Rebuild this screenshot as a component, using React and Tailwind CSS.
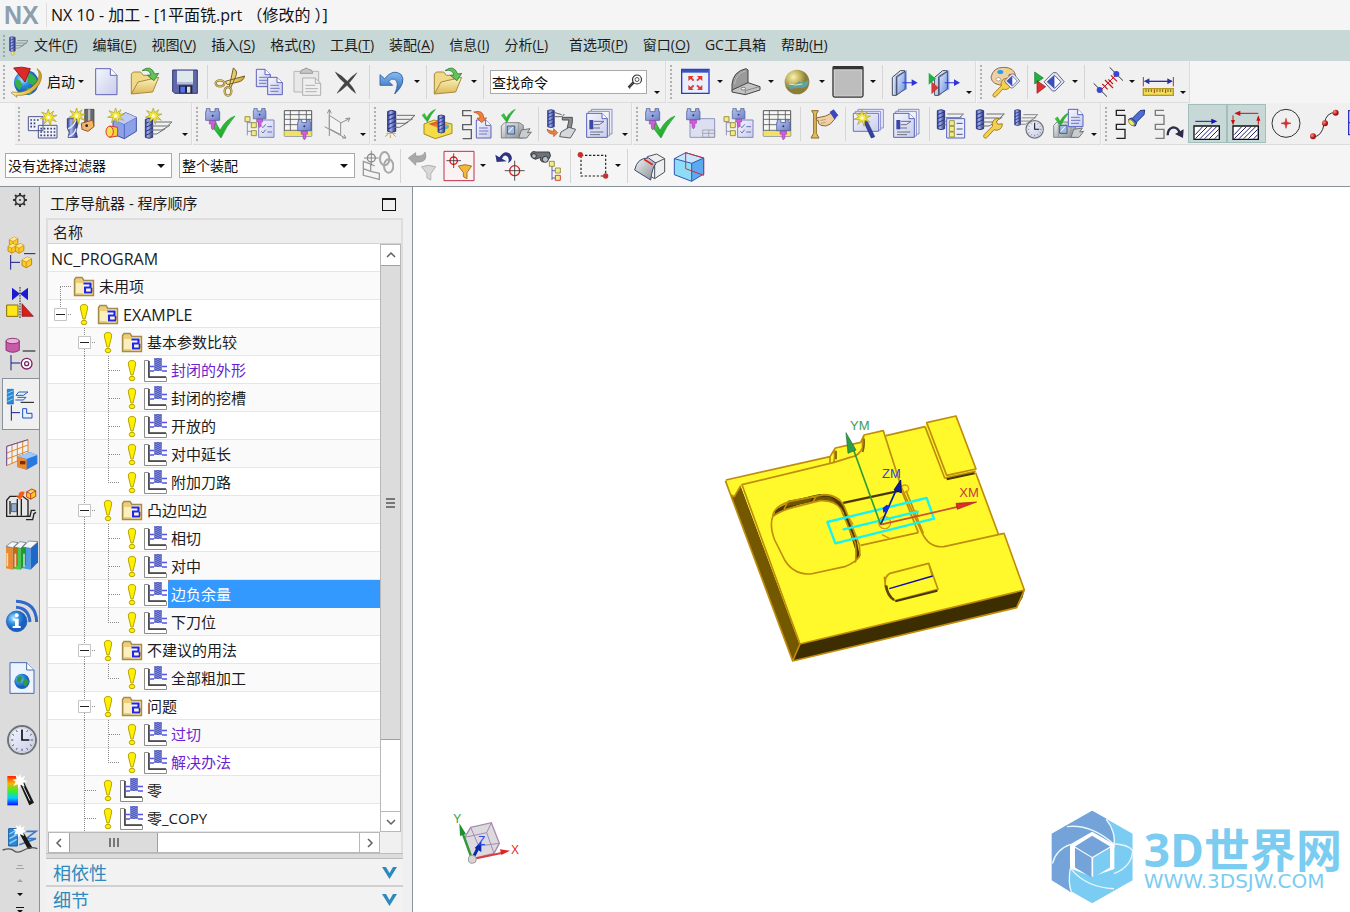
import React, { useState } from 'react';

const Svg = ({ children, className = 'w-8 h-8', box = '0 0 96 96' }) => (
  <svg viewBox={box} className={`${className} shrink-0`} fill="none" aria-hidden="true">{children}</svg>
);

/* ---------- shared icon parts, drawn on a 96 unit grid ---------- */

const Defs = () => (
  <svg className="absolute w-0 h-0" aria-hidden="true">
    <defs>
      <linearGradient id="tool"><stop offset="0" stopColor="#2b3a9a" /><stop offset=".35" stopColor="#a8b4f0" /><stop offset="1" stopColor="#26307c" /></linearGradient>
      <linearGradient id="page" x2="1" y2="1"><stop offset="0" stopColor="#f4f6ff" /><stop offset="1" stopColor="#c9cdea" /></linearGradient>
      <linearGradient id="folder" x2="0" y2="1"><stop offset="0" stopColor="#fdf3bd" /><stop offset="1" stopColor="#dcb95a" /></linearGradient>
      <linearGradient id="head" x2="1" y2="1"><stop offset="0" stopColor="#b9c6ef" /><stop offset="1" stopColor="#6c80c8" /></linearGradient>
      <linearGradient id="steel" x2="1" y2="1"><stop offset="0" stopColor="#f2f4f5" /><stop offset="1" stopColor="#858c90" /></linearGradient>
      <linearGradient id="plane" x2="1" y2="1"><stop offset="0" stopColor="#dfeaff" /><stop offset="1" stopColor="#6f90dd" /></linearGradient>
      <linearGradient id="green" x2="1" y2="1"><stop offset="0" stopColor="#4be04b" /><stop offset="1" stopColor="#118a22" /></linearGradient>
      <linearGradient id="gold"><stop offset="0" stopColor="#fdf0a0" /><stop offset="1" stopColor="#cf9f22" /></linearGradient>
      <linearGradient id="undo" x2="0" y2="1"><stop offset="0" stopColor="#86bdf0" /><stop offset="1" stopColor="#2b62b8" /></linearGradient>
      <linearGradient id="hot" x2="1" y2="1"><stop offset="0" stopColor="#e0302c" /><stop offset="1" stopColor="#f5d030" /></linearGradient>
      <linearGradient id="rainbow" x2="0" y2="1">
        <stop offset="0" stopColor="#ff2000" /><stop offset=".25" stopColor="#ffb000" /><stop offset=".5" stopColor="#40f020" /><stop offset=".75" stopColor="#00d0ff" /><stop offset="1" stopColor="#1010ff" />
      </linearGradient>
      <radialGradient id="globe" cx=".35" cy=".35"><stop offset="0" stopColor="#bfeaff" /><stop offset=".55" stopColor="#2d8fe0" /><stop offset="1" stopColor="#1a5fc0" /></radialGradient>
      <radialGradient id="ball" cx=".35" cy=".3"><stop offset="0" stopColor="#f7f3b0" /><stop offset=".6" stopColor="#c0b25c" /><stop offset="1" stopColor="#8a7e3c" /></radialGradient>
      <radialGradient id="dot" cx=".35" cy=".35"><stop offset="0" stopColor="#ff8d80" /><stop offset="1" stopColor="#a81010" /></radialGradient>
    </defs>
  </svg>
);

const At = ({ x = 0, y = 0, s = 1, children }) => <g transform={`translate(${x} ${y}) scale(${s})`}>{children}</g>;

const Tool = ({ x, y, s }) => (
  <At x={x} y={y} s={s}>
    <path d="M0 4q11-6 22 0v54q-11 6-22 0z" fill="url(#tool)" stroke="#232c70" strokeWidth="2.5" />
    <path d="M1 16l20-8M1 28l20-9M1 40l20-9M1 52l20-9" stroke="#27348f" strokeWidth="3" />
  </At>
);
const Hatch = ({ x, y, s }) => (
  <At x={x} y={y} s={s}>
    <path d="M0 0h54M-6 12h46l14-12M-12 24h36l24-14M-18 36h26l26-16" stroke="#6d6f73" strokeWidth="3" />
  </At>
);
const Spark = ({ x, y, s }) => (
  <At x={x} y={y} s={s}>
    <path d="M0-25l4 15 12-9-6 13 16 0-14 7 12 12-15-6-3 18-6-17-13 12 5-15-16-1 14-7-10-13 15 6z" fill="#f3e63a" stroke="#a99a33" strokeWidth="2" />
    <circle r="5" fill="#fffde0" />
  </At>
);
const Head = ({ x, y, s }) => (
  <At x={x} y={y} s={s}>
    <path d="M2 1h11v9h15V1h11v9h3v26H0V10h2z" fill="url(#head)" stroke="#50629f" strokeWidth="2.5" />
    <circle cx="21" cy="22" r="3" fill="#243070" />
    <path d="M11 37h20v10h-5v12l-5 6-4-6V47h-6z" fill="#d35be0" stroke="#8c2aa0" strokeWidth="1.5" />
  </At>
);
const Check = ({ x, y, s }) => (
  <At x={x} y={y} s={s}><path d="M0 30l13-9 12 22Q42 10 70 0q-26 30-42 66z" fill="url(#green)" stroke="#159a2a" strokeWidth="2" /></At>
);
const Page = ({ x, y, w = 44, h = 56, c = '#5f62b8' }) => (
  <g>
    <path d={`M${x} ${y}h${w - 16}l16 16v${h - 16}h-${w}z`} fill="url(#page)" stroke={c} strokeWidth="3" />
    <path d={`M${x + w - 16} ${y}v16h16`} fill="#fff" stroke={c} strokeWidth="3" />
    <path d={`M${x + 8} ${y + 24}h${w - 18}M${x + 8} ${y + 33}h${w - 16}M${x + 8} ${y + 42}h${w - 20}`} stroke={c} strokeWidth="2.5" />
  </g>
);
const Sq = ({ x, y, c = '#8b8230' }) => <path d={`M${x} ${y}h15v15h-15z`} fill="#f2eb8c" stroke={c} strokeWidth="2.5" />;
const Snake = ({ x, y, c = '#222' }) => <path transform={`translate(${x} ${y})`} d="M27 0H1v15h26v27H1v15h26v27H1" stroke={c} strokeWidth="4" />;
const Wrench = ({ x, y, s }) => (
  <At x={x} y={y} s={s}><path d="M4 52L30 26Q26 8 42 2q6-2 9 0L42 12l5 8 14-2q0 16-14 20-7 1-12-1L14 60q-2 5-9 3-6-4-1-11z" fill="#f5cf50" stroke="#9d7a1c" strokeWidth="3" /></At>
);
const Machine = ({ x, y, s }) => (
  <At x={x} y={y} s={s}>
    <path d="M0 58V22l10-10h44l12 8v38z" fill="url(#steel)" stroke="#707579" strokeWidth="2.5" />
    <path d="M14 12v46M52 12v46" stroke="#8c9195" strokeWidth="2.5" />
    <path d="M18 22h22v24H18z" fill="#9fbbe4" stroke="#4c5a78" strokeWidth="3" /><path d="M22 40l12-14" stroke="#fff" strokeWidth="3" />
    <path d="M60 34l26-4-8 12 12-2-14 18H52z" fill="#c9cdd0" stroke="#6e7478" strokeWidth="3" />
  </At>
);
const OpenFolder = () => (
  <>
    <path d="M4 84V24l6-6h22l8 10h22v16" fill="#f0d988" stroke="#a98a3a" strokeWidth="3" />
    <path d="M4 84L24 48l62-14-18 44z" fill="url(#folder)" stroke="#a98a3a" strokeWidth="3" />
    <path d="M36 14Q62-6 74 24l12-2-14 22-20-16 11-1Q58 8 36 14z" fill="#62c45a" stroke="#2f8030" strokeWidth="2.5" />
  </>
);
const Book = () => (
  <>
    <path d="M14 28L54 12v58L14 90z" fill="url(#plane)" />
    <path d="M10 34v54h12V32l26-16v52L22 88M10 34L34 14h14" stroke="#454a5c" strokeWidth="3" fill="#d9dde6" fillOpacity=".5" />
    <path d="M24 34l24-17v52L24 86z" fill="url(#plane)" stroke="#34407c" strokeWidth="2" />
    <path d="M40 49h28v-9l18 10-18 10v-8H40z" fill="#2a34d8" />
  </>
);
const Table = () => (
  <>
    <path d="M4 8h82v76H4z" fill="#f6f6f4" stroke="#55575c" strokeWidth="3" />
    <path d="M4 68h82v16H4z" fill="#efe264" />
    <path d="M4 20h82M4 34h82M4 50h82M4 67h82M22 8v60M48 8v60M70 8v60" stroke="#55575c" strokeWidth="2.5" />
    <Head x="44" y="34" s=".95" />
  </>
);
const TreeHead = () => (
  <>
    <path d="M44 36h46v52H44z" fill="url(#page)" stroke="#7d82c4" strokeWidth="3" />
    <path d="M10 28v54M10 44h14M10 70h14" stroke="#7a7dbb" strokeWidth="2.5" />
    <Sq x="3" y="26" /><Sq x="22" y="44" /><Sq x="22" y="68" />
    <path d="M52 54l5 5 8-10M70 56h14M52 70l5 5 8-10M70 72h14" stroke="#6a70b0" strokeWidth="3" />
    <Head x="28" y="0" s=".9" />
  </>
);
const Doc3 = () => (
  <>
    <path d="M22 4h62v74H22z" fill="#eceef6" stroke="#8a8fc0" strokeWidth="3" />
    <path d="M14 10h62v74H14z" fill="#f3f4fa" stroke="#8a8fc0" strokeWidth="3" />
    <path d="M8 16h46l16 16v56H8z" fill="url(#page)" stroke="#5562c0" strokeWidth="3" /><path d="M54 16v16h16" fill="#fff" stroke="#5562c0" strokeWidth="3" />
    <path d="M30 40h30l-14 10H30M28 60h20M18 72h40M18 80h30" stroke="#6b6f80" strokeWidth="3" /><path d="M16 36h12v28H16z" fill="#3b48a8" />
  </>
);
const Axis3 = () => (
  <>
    <path d="M22 84V6M16 16l6-12 6 12M22 62l60-30M70 32l14-2-6 12M8 56l62 34M60 90l12 0-6-10" stroke="#8d9093" strokeWidth="3" />
    <path d="M22 22l34 22v36L22 62z" fill="#f3f3f3" stroke="#8d9093" strokeWidth="3" />
  </>
);
const Clock = ({ x, y, s }) => (
  <At x={x} y={y} s={s}>
    <circle r="42" fill="#eef4fb" stroke="#6f7478" strokeWidth="6" />
    <circle r="37" fill="url(#page)" stroke="#b6bcc2" strokeWidth="2" />
    <path d="M0-33v7M0 26v7M-33 0h7M26 0h7M-17-29l3 5M17-29l-3 5M-17 29l3-5M17 29l-3-5M-29-17l5 3M29-17l-5 3M-29 17l5-3M29 17l-5-3" stroke="#555" strokeWidth="3" />
    <path d="M0-30V0h22" stroke="#111" strokeWidth="5" />
  </At>
);
const Target = ({ x, y, r = 14 }) => (
  <g>
    <circle cx={x} cy={y} r={r} stroke="#dd1f1f" strokeWidth="4" />
    <path d={`M${x - r * 2} ${y}h${r * 4}M${x} ${y - r * 2}v${r * 4}`} stroke="#3a3030" strokeWidth="2.5" />
  </g>
);
const Funnel = ({ x, y, s, f = '#f0b83c', c = '#94691a' }) => (
  <At x={x} y={y} s={s}><path d="M0 4q20-8 40 0L26 24v18l-11-6V24z" fill={f} stroke={c} strokeWidth="2.5" /></At>
);
const CadBlock = ({ x, y, s }) => (
  <At x={x} y={y} s={s}>
    <path d="M0 10L18 0l14 6v20L14 36 0 28z" fill="#ffc928" stroke="#a87400" strokeWidth="2.5" />
    <path d="M0 10L18 0l14 6-18 11z" fill="#ffe88a" />
    <path d="M0 10l14 7 18-11M14 17v19" stroke="#c08a10" strokeWidth="2.5" />
  </At>
);
const TwoArrows = () => <><path d="M2 18l26 18L2 54z" fill="#22b043" stroke="#0b7a24" strokeWidth="2" /><path d="M9 44l26 18-26 20z" fill="#dd3030" stroke="#8f1515" strokeWidth="2" /></>;
const Gem = ({ x, y, s }) => (
  <At x={x} y={y} s={s}>
    <path d="M0 28L28 0h10l24 28-28 28H26z" fill="#e6e9f2" stroke="#5c6580" strokeWidth="3" />
    <path d="M10 28L32 8l20 20-20 20z" fill="#fff" stroke="#4a54a8" strokeWidth="3" /><path d="M32 8v40L10 28z" fill="#3c50b8" />
  </At>
);

const icons = {
  globe: (
    <>
      <circle cx="46" cy="50" r="37" fill="url(#globe)" />
      <path d="M52 22q20 2 26 22l-12 14-16-10zM48 64l18 4-6 16-16 2zM12 40l14 2 8 16-8 14Q10 62 12 40z" fill="#35b04a" />
      <path d="M2 78Q46 86 76 50 92 26 78 8q24 14 6 48Q58 92 16 88l2 6L0 80z" fill="url(#gold)" stroke="#9a741c" strokeWidth="2" />
      <path d="M8 6q24-6 50 2L42 48z" fill="#dc2a2a" stroke="#8e1010" strokeWidth="2.5" />
    </>
  ),
  newFile: <><path d="M14 8h44l20 20v58H14z" fill="url(#page)" stroke="#6064b4" strokeWidth="3" /><path d="M58 8v20h20" fill="#fff" stroke="#6064b4" strokeWidth="3" /></>,
  open: <OpenFolder />,
  save: (
    <>
      <path d="M11 12h74v70H17l-6-6z" fill="#6069a8" stroke="#32397a" strokeWidth="3" />
      <path d="M24 14h48v36H24z" fill="#dfe8ea" /><path d="M24 50h48v5H24z" fill="#b8c0d4" /><path d="M30 58h40v24H30z" fill="#20243c" /><path d="M34 62h14v18H34z" fill="#5870f0" /><path d="M54 62h10v18H54z" fill="#ddd" />
    </>
  ),
  cut: (
    <>
      <path d="M34 46l58-16q-4 16-20 18l-32 8zM46 62L58 6q16 10 6 28L50 66z" fill="url(#gold)" stroke="#75602a" strokeWidth="3" />
      <ellipse cx="18" cy="52" rx="13" ry="9" stroke="#8a7330" strokeWidth="7" /><ellipse cx="42" cy="76" rx="10" ry="13" stroke="#8a7330" strokeWidth="7" />
      <ellipse cx="18" cy="52" rx="13" ry="9" stroke="#e8cf70" strokeWidth="3" /><ellipse cx="42" cy="76" rx="10" ry="13" stroke="#e8cf70" strokeWidth="3" />
    </>
  ),
  copy: <><Page x={10} y={10} w={42} h={52} /><Page x={44} y={34} w={44} h={52} /></>,
  paste: (
    <>
      <path d="M6 16h74v62H6z" fill="#e8e8e8" stroke="#b5b5b5" strokeWidth="3" /><path d="M24 22q2-12 12-12 6-8 14 0 12 0 12 12z" fill="#c6c6c6" stroke="#9a9a9a" strokeWidth="3" />
      <path d="M32 36h38l16 16v36H32z" fill="#efefef" stroke="#b0b0b0" strokeWidth="3" /><path d="M70 36v16h16M40 58h30M40 68h38M40 77h34" stroke="#b0b0b0" strokeWidth="3" />
    </>
  ),
  del: <path d="M13 18q20 10 36 28Q62 30 78 20q-10 16-24 31 16 17 20 31-14-10-26-24-14 14-30 24 8-14 23-31Q22 36 13 18z" fill="#444" stroke="#2d2d2d" strokeWidth="1" />,
  undo: <path d="M12 26l14 12Q52 6 76 26q16 24-20 58 16-36 0-44-10-4-18 6l12 12H12z" fill="url(#undo)" stroke="#2a5aa5" strokeWidth="2.5" />,
  fit: (
    <>
      <path d="M8 10h82v72H8z" fill="#e9f0fc" stroke="#2b36d8" strokeWidth="4" /><path d="M9 11h80v9H9z" fill="#3a53b8" />
      <path d="M28 30h16l-5 5 7 7-4 4-7-7-7 6zM70 30H54l5 5-7 7 4 4 7-7 7 6zM28 72h16l-5-5 7-7-4-4-7 7-7-6zM70 72H54l5-5-7-7 4-4 7 7 7-6z" fill="#e23a2e" />
    </>
  ),
  bracket: (
    <>
      <path d="M6 54Q10 16 48 8l6 4v42L6 74z" fill="#9a9a9a" stroke="#444" strokeWidth="3" /><path d="M14 54Q18 22 48 14" stroke="#bbb" strokeWidth="3" /><path d="M6 72l48-22 36 12v10L46 86 6 78z" fill="#c4c4c4" stroke="#444" strokeWidth="3" />
      <path d="M46 74v10M46 74l42-12" stroke="#666" strokeWidth="2" /><ellipse cx="40" cy="68" rx="7" ry="4" fill="#eee" stroke="#555" strokeWidth="2" />
    </>
  ),
  sphere: <><circle cx="48" cy="48" r="37" fill="url(#ball)" /><path d="M14 52q30 8 40-6 10 8 28-4 2 20-18 24-20-4-38 4 8-10-12-18z" fill="#5ba3a5" /><path d="M24 54q20 6 40 0" stroke="#e8e8c0" strokeWidth="3" /></>,
  shade: <><path d="M3 6q0-5 5-5h80q5 0 5 5v82q0 5-5 5H8q-5 0-5-5z" fill="#bdbdbd" stroke="#333" strokeWidth="4" /><path d="M4 3h88v7H4z" fill="#333" /><path d="M7 12h82v78H7z" stroke="#dcdcdc" strokeWidth="2" /></>,
  plane: <Book />,
  plane2: <><At x="10"><Book /></At><path d="M2 20l22 18L2 56z" fill="#22b043" /><path d="M11 48l20 17-20 18z" fill="#d83a3a" stroke="#8f1515" /></>,
  palette: (
    <>
      <path d="M6 34Q12 4 44 4t36 26q0 14-22 14-12 2-10 14-40 0-42-24z" fill="#ecd0a8" stroke="#8e6f4a" strokeWidth="3" />
      <ellipse cx="34" cy="18" rx="9" ry="6" fill="#28a0e8" /><ellipse cx="56" cy="14" rx="7" ry="5" fill="#f5df2c" /><ellipse cx="66" cy="28" rx="8" ry="5" fill="#e04020" /><ellipse cx="28" cy="40" rx="7" ry="5" fill="#fff" stroke="#a58560" strokeWidth="2" />
      <Wrench x="10" y="36" s=".9" /><Gem x="46" y="24" s=".75" />
    </>
  ),
  play: <><At x="0"><TwoArrows /></At><Gem x="30" y="20" s=".98" /></>,
  dist: (
    <>
      <path d="M8 52l40 40M56 4l40 40" stroke="#333" strokeWidth="3" /><path d="M28 74l50-50" stroke="#d12" strokeWidth="3" />
      <path d="M34 54l16 16M42 42l24 24M52 40l14 14M60 28l18 18" stroke="#c01818" strokeWidth="3.5" /><circle cx="26" cy="72" r="9" fill="#3b46d2" /><circle cx="76" cy="24" r="9" fill="#3b46d2" />
    </>
  ),
  ruler: (
    <>
      <path d="M4 33v28M94 33v28" stroke="#d02020" strokeWidth="3" /><path d="M8 46h82" stroke="#2c349c" strokeWidth="4" /><path d="M6 46l16-9v18zM92 46l-16-9v18z" fill="#2c349c" />
      <path d="M4 68h90v20H4z" fill="#f1dc58" stroke="#b59920" strokeWidth="4" /><path d="M12 70v8M20 70v8M28 70v8M45 70v8M54 70v8M62 70v8M78 70v8M86 70v8" stroke="#4d4320" strokeWidth="2.5" /><path d="M37 70v11M71 70v11" stroke="#c03020" strokeWidth="3" />
    </>
  ),
  mProgram: (
    <>
      <path d="M4 26h44v42H4zM34 52h56v38H34z" fill="#f1f3fb" stroke="#4c548c" strokeWidth="3" />
      <path d="M10 36h30M10 46h20M10 56h20M40 62h46M40 72h46M40 82h46" stroke="#3c4270" strokeWidth="5" strokeDasharray="5 5" /><Spark x="64" y="28" />
    </>
  ),
  mTool: (
    <>
      <path d="M56 4h28v50l-14 12-14-8z" fill="#666a70" stroke="#3a3a3a" strokeWidth="2" /><path d="M66 4h7v54h-7z" fill="#bbb" />
      <path d="M46 46l34-10 4 20-18 14-18-6z" fill="#f3b46c" stroke="#94582a" strokeWidth="3" /><circle cx="62" cy="53" r="4" fill="#222" />
      <path d="M4 32h28q6 20-2 38l4 18H6q8-14-2-28z" fill="url(#tool)" stroke="#2a3680" strokeWidth="2.5" /><path d="M6 62q16-4 24-26M8 86q18-6 22-24" stroke="#e4eaff" strokeWidth="4" /><Spark x="32" y="24" />
    </>
  ),
  mGeom: (
    <>
      <path d="M24 36l38-22 32 14v42L58 92 24 78z" fill="#8ba2ea" stroke="#40509e" strokeWidth="3" /><path d="M24 36l34 12 36-20M58 48v44" stroke="#5568bc" strokeWidth="3" /><path d="M24 36l38-22 32 14-36 20z" fill="#c0cbf6" />
      <path d="M14 54l24 4v26l-24 4z" fill="#f0d33a" stroke="#d8362a" strokeWidth="3" /><ellipse cx="14" cy="71" rx="11" ry="16" fill="#f8e14c" stroke="#d8362a" strokeWidth="3" /><Spark x="32" y="24" />
    </>
  ),
  mOp: <><Tool x="4" y="30" /><Hatch x="30" y="42" /><Spark x="28" y="24" /></>,
  vTool: <><Check x="20" y="24" /><Head x="2" y="1" /></>,
  vTree: <TreeHead />,
  vTable: <Table />,
  axis: <Axis3 />,
  opNew: <><Tool x="14" y="6" s="1.1" /><Hatch x="42" y="22" /><path d="M6 86l10-8M22 90v-10M38 86l-8-8M10 76l28 0" stroke="#d8a820" strokeWidth="3" /></>,
  opCheck: (
    <>
      <path d="M6 48l30-12 54 12v28L40 92 6 78z" fill="#f4db4a" stroke="#a58c20" strokeWidth="3" /><path d="M20 48l24-8 36 10-26 12z" fill="url(#hot)" /><path d="M52 62l28-12v10l-28 14z" fill="#48b8d8" />
      <Tool x="48" y="20" s=".9" /><Check x="0" y="4" s=".58" />
    </>
  ),
  opList: <><Snake x={4} y={8} c="#5c5f64" /><Page x={46} y={36} w={44} h={54} /><path d="M38 12q30-8 30 18h9L62 44 48 30h9Q58 18 38 12z" fill="#f0803a" stroke="#b04a18" strokeWidth="2" /></>,
  opMachine: <><Machine x="4" y="32" /><Check x="4" y="4" s=".6" /></>,
  post: (
    <>
      <Tool x="8" y="4" s=".9" /><path d="M30 14l20 6M30 26h22l6-8" stroke="#666" strokeWidth="3" /><path d="M6 64q4 16 20 14v8l12-12-12-12v8q-10 0-20-6z" fill="#e98340" stroke="#b05020" strokeWidth="2" />
      <path d="M52 28h30v14l-6 30h-12l8-36H52z" fill="#8b8f94" stroke="#4d5054" strokeWidth="3" /><path d="M48 72l24-14 20 6-16 26-32-4z" fill="#d5d8db" stroke="#5c6064" strokeWidth="3" />
    </>
  ),
  docs: <Doc3 />,
  vPage: <><path d="M18 32h74v56H18z" fill="#dcdff0" stroke="#8f93c6" strokeWidth="3" /><path d="M56 66h36v22H56zM56 76h36M74 66v22" stroke="#9b9ca6" strokeWidth="2.5" /><Head x="8" y="1" s=".95" /></>,
  hand: (
    <>
      <path d="M14 8h20l-6 10v58l8 14H12l8-14V18z" fill="#e3bd62" stroke="#8c6a24" strokeWidth="3" />
      <path d="M28 30l28-6 20-10 10 16-16 18q-14 10-28 4-10-4-8-14l-6-2z" fill="#f0cfa0" stroke="#8a6740" strokeWidth="3" /><path d="M40 38l16-4M42 46l14-3" stroke="#b08a5c" strokeWidth="2" /><path d="M68 12l12-8 14 18-12 12z" fill="#3c48c0" />
    </>
  ),
  wizard: (
    <>
      <path d="M18 4h76v56H18z" fill="#eef" stroke="#8a8ed0" strokeWidth="3" /><path d="M10 10h76v56H10z" fill="#eef" stroke="#8a8ed0" strokeWidth="3" /><path d="M4 16h76v54H4z" fill="url(#page)" stroke="#6a70c0" strokeWidth="3" />
      <path d="M34 38l8-6 26 54-10 4z" fill="#3443a8" stroke="#1d2868" strokeWidth="2" /><Spark x="30" y="30" />
    </>
  ),
  opProps: <><Tool x="4" y="4" s="1" /><Hatch x="34" y="18" s=".9" /><path d="M32 32h54v58H32z" fill="#e9edff" stroke="#5562c0" strokeWidth="3" /><Sq x="40" y="38" /><Sq x="40" y="55" /><Sq x="40" y="72" /><path d="M62 46h18M62 63h18M62 79h18" stroke="#556" strokeWidth="3" /></>,
  opWrench: <><Tool x="4" y="4" /><Hatch x="34" y="18" /><Wrench x="24" y="30" s=".95" /></>,
  opClock: <><Tool x="2" y="4" s=".8" /><Hatch x="28" y="20" s=".8" /><Clock x="62" y="64" s=".62" /></>,
  opSheet: <><Machine x="2" y="30" /><Page x={46} y={4} w={44} h={52} c="#5562c0" /><Check x="6" y="14" s=".6" /></>,
  pathShow: (
    <>
      <Snake x={6} y={7} /><path d="M52 34l26-26 14-2-2 14-26 26z" fill="#4a6fd6" stroke="#24337e" strokeWidth="3" /><path d="M44 34l8-4 16 14-4 10q-18 0-20-20z" fill="#4a6fd6" stroke="#24337e" strokeWidth="3" /><ellipse cx="52" cy="44" rx="6" ry="11" transform="rotate(-45 52 44)" fill="#f3e860" stroke="#8a8130" strokeWidth="2" />
    </>
  ),
  pathReplay: <><Snake x={6} y={7} c="#77797c" /><path d="M44 82q0-20 16-24 16 0 20 18" stroke="#2a2c4a" strokeWidth="7" /><path d="M66 78l26-14-2 26z" fill="#2a2c4a" /></>,
  feed: <><path d="M10 40h56" stroke="#1212b8" strokeWidth="3" /><path d="M58 32l18 8-18 8z" fill="#1212b8" /><path d="M6 54h76v40H6z" fill="#fff" stroke="#111" strokeWidth="4" /><path d="M10 80l22-24M10 92l36-36M24 92l36-36M38 92l36-36M52 92l28-28M68 92l12-12" stroke="#23236e" strokeWidth="3" /></>,
  feedBox: (
    <>
      <path d="M20 16h62M6 22v24M82 50V26" stroke="#c41212" strokeWidth="3" /><path d="M28 8L10 16l18 8zM0 36h12l-6 16zM76 38h12l-6-16z" fill="#c41212" />
      <path d="M6 54h76v40H6z" fill="#fff" stroke="#111" strokeWidth="4" /><path d="M10 80l22-24M10 92l36-36M24 92l36-36M38 92l36-36M52 92l28-28M68 92l12-12" stroke="#23236e" strokeWidth="3" />
    </>
  ),
  circle: <><circle cx="48" cy="46" r="42" stroke="#333" strokeWidth="3" /><path d="M48 31l3 12 12 3-12 3-3 12-3-12-12-3 12-3z" fill="#d03030" stroke="#d03030" strokeWidth="2" /></>,
  spline: <><path d="M12 86q26 2 34-40Q52 12 80 14" stroke="#333" strokeWidth="3" /><circle cx="12" cy="85" r="9" fill="url(#dot)" /><circle cx="48" cy="46" r="9" fill="url(#dot)" /><circle cx="80" cy="14" r="9" fill="url(#dot)" /></>,
  box: <path d="M2 8h82v72H2zM2 44h82" stroke="#2a34c8" strokeWidth="4" />,
  link: (
    <>
      <path d="M4 34l22 8v22L4 56zM26 64l26 6v18L4 76V56M26 42l12 6" stroke="#9a9a9a" strokeWidth="4" /><circle cx="28" cy="24" r="12" stroke="#8a8a8a" strokeWidth="4" /><path d="M28 2v44M6 24h44" stroke="#8a8a8a" strokeWidth="3" />
      <ellipse cx="68" cy="26" rx="14" ry="20" stroke="#a8a8a8" strokeWidth="6" /><ellipse cx="80" cy="48" rx="14" ry="20" stroke="#a8a8a8" strokeWidth="6" />
    </>
  ),
  filterReset: <><path d="M4 24L26 8v10h12q14-2 16-12 10 28-18 30H26v10z" fill="#a9a9a9" stroke="#8f8f8f" strokeWidth="2" /><Funnel x="44" y="46" s="1.05" f="#d8d8d8" c="#aaa" /></>,
  filterSel: <><path d="M3 4h90v88H3z" fill="#fbf3f3" stroke="#c2304a" strokeWidth="3" /><Target x={32} y={32} r={11} /><Funnel x="46" y="44" /></>,
  rotateSel: <><path d="M4 14l12 8Q34-4 50 14q10 14-8 26 6-16-4-22-8-6-14 8l14 8L8 36z" fill="#2e3480" /><Target x={62} y={62} r={15} /></>,
  findTree: (
    <>
      <path d="M2 12Q6 2 18 6l40 0q8 12-2 22l-16 8q-12-2-8-14l-16 6Q0 22 2 12z" fill="#6c7278" stroke="#3c4044" strokeWidth="3" /><circle cx="46" cy="28" r="9" fill="#b9c2ca" stroke="#333" strokeWidth="3" /><circle cx="12" cy="18" r="7" fill="#b9c2ca" stroke="#333" strokeWidth="3" />
      <path d="M66 44v46M66 62h10M66 84h10" stroke="#5b60b0" strokeWidth="3" /><Sq x="58" y="34" /><Sq x="76" y="54" /><Sq x="76" y="76" c="#d02020" />
    </>
  ),
  rectSel: <><path d="M12 16h74v62H12z" stroke="#222" strokeWidth="3.5" strokeDasharray="7 5" /><circle cx="10" cy="14" r="8" fill="#c83030" /><circle cx="86" cy="78" r="8" fill="#c83030" /></>,
  face: (
    <>
      <path d="M40 20l28-8 24 14v40L62 86 40 74z" fill="#eceeef" stroke="#4e5258" strokeWidth="3" /><path d="M62 40l30-14M62 40v46" stroke="#4e5258" strokeWidth="3" />
      <path d="M2 60Q10 22 44 24l22 16Q54 54 50 90z" fill="url(#steel)" stroke="#3a4a78" strokeWidth="3" /><path d="M30 28l26 16" stroke="#e02020" strokeWidth="5" />
    </>
  ),
  cube: (
    <>
      <path d="M4 26L38 8l54 16v48L56 94 4 74z" fill="#5da8ee" /><path d="M4 26l52 14v54L4 74z" fill="#8fdcf7" /><path d="M4 26L38 8l54 16-36 16z" fill="#c8e6fa" /><path d="M4 26L38 8l54 16v48L56 94 4 74zM4 26l52 14 36-16M56 40v54" stroke="#3358b8" strokeWidth="3" />
      <path d="M38 8v48l54 20V24z" stroke="#d42c40" strokeWidth="3" />
    </>
  ),
};

/* ---------- toolbars ---------- */

const Caret = ({ low, label = '更多' }) => (
  <button type="button" aria-label={label} className={`w-3 h-full flex justify-center shrink-0 ${low ? 'items-end pb-2' : 'items-center'}`}>
    <Svg className="w-[6px] h-[3px]" box="0 0 6 3"><path d="M0 0h6L3 3z" fill="#111" /></Svg>
  </button>
);
const Sep = () => <div className="w-[6px] flex justify-center shrink-0"><div className="w-px h-[34px] bg-[#d5d5d5]" /></div>;
const Grip = () => <div className="w-2 flex justify-center shrink-0"><div className="h-[34px] border-l-2 border-dotted border-[#b0b0b0]" /></div>;
const MenuGrip = () => <div className="w-2 flex justify-center shrink-0"><div className="h-[22px] border-l-2 border-dotted border-[#98a8a6]" /></div>;
const IconBtn = ({ name, on, narrow }) => (
  <button
    type="button"
    aria-label={name}
    className={`h-[39px] flex items-center justify-center shrink-0 ${narrow ? 'w-9' : 'w-[39px]'} ${on ? 'bg-[#c8d8d7] border border-[#a3bfbb]' : ''}`}
  >
    <Svg>{icons[name]}</Svg>
  </button>
);

// '|' separator, 'v' drop-down arrow, 'm' overflow arrow, '*' marks a pressed button
const Items = ({ list }) => list.map((it, i) => {
  if (it === '|') return <Sep key={i} />;
  if (it === 'v') return <Caret key={i} />;
  if (it === 'm') return <Caret key={i} low />;
  return <IconBtn key={i} name={it.replace('*', '')} on={it.endsWith('*')} />;
});
const Group = ({ children }) => (
  <div className="flex items-center h-[42px] bg-[#f0f0f0] border-r border-b border-[#dcdcdc] shrink-0"><Grip />{children}</div>
);

const menus = [['文件', 'F'], ['编辑', 'E'], ['视图', 'V'], ['插入', 'S'], ['格式', 'R'], ['工具', 'T'], ['装配', 'A'], ['信息', 'I'], ['分析', 'L'], ['首选项', 'P', true], ['窗口', 'O'], ['GC工具箱'], ['帮助', 'H']];

const row2 = [
  ['mProgram', 'mTool', 'mGeom', 'mOp', 'm'],
  ['vTool', 'vTree', 'vTable', 'axis', 'm'],
  ['opNew', 'opCheck', 'opList', 'opMachine', '|', 'post', 'docs', 'm'],
  ['vTool', 'vPage', 'vTree', 'vTable', '|', 'hand', '|', 'wizard', 'docs', '|', 'opProps', 'opWrench', 'opClock', 'opSheet', 'm'],
  ['pathShow', 'pathReplay', 'feed*', 'feedBox*', 'circle', 'spline', 'box'],
];

const Combo = ({ value, className, label }) => (
  <div className={`relative ${className}`}>
    <select aria-label={label} className="appearance-none w-full h-[25px] bg-white border border-[#a9a9a9] pl-[2px] text-sm leading-none text-[#111] rounded-none outline-none">
      <option>{value}</option>
    </select>
    <Svg className="w-2 h-1 absolute right-[7px] top-[11px] pointer-events-none" box="0 0 8 4"><path d="M0 0h8L4 4z" fill="#111" /></Svg>
  </div>
);

/* ---------- resource bar ---------- */

const side = [
  <><CadBlock x="10" y="0" s=".8" /><CadBlock x="6" y="20" s=".8" /><CadBlock x="28" y="20" s=".8" /><path d="M14 54v44M14 76h28M54 50h34" stroke="#1a1a8c" strokeWidth="3" /><CadBlock x="48" y="60" s=".9" /></>,
  <><path d="M18 2l24 18-24 20zM66 2L42 20l24 20z" fill="#1a1ad0" /><path d="M42 0v94" stroke="#222" strokeWidth="3" strokeDasharray="5 3" /><path d="M2 54h34v34H2z" fill="#ffe81a" stroke="#8a6a00" strokeWidth="3" /><path d="M48 50l34 38H48z" fill="#d8201c" stroke="#800c0c" strokeWidth="2" /></>,
  <><path d="M0 12v28q20 12 40 0V12z" fill="#c65ba6" stroke="#7b2464" strokeWidth="2.5" /><ellipse cx="20" cy="12" rx="20" ry="8" fill="#eeb0dc" stroke="#7b2464" strokeWidth="2.5" /><path d="M50 42h38" stroke="#111" strokeWidth="3" /><path d="M15 54v46M15 78h28" stroke="#1a1a8c" strokeWidth="3" /><circle cx="62" cy="80" r="16" fill="#fff" stroke="#7b2464" strokeWidth="4" /><circle cx="62" cy="80" r="6" stroke="#7b2464" strokeWidth="4" /></>,
  <><path d="M4 4h18v44H4z" fill="#2b8ad8" stroke="#1a5aa0" strokeWidth="2" /><path d="M4 16l18-8M4 28l18-8M4 40l18-8" stroke="#8fd0f8" strokeWidth="3" /><path d="M38 12h28l-14 10H30zM34 28h26l-8 8H28" stroke="#2060b8" strokeWidth="3" /><path d="M44 43h40" stroke="#111" strokeWidth="3" /><path d="M16 52v46M16 74h26" stroke="#1a1a8c" strokeWidth="3" /><path d="M50 62h12v14h16v14H50z" fill="#e8f2ff" stroke="#1c50c0" strokeWidth="3" /></>,
  <><path d="M2 22L66 2v50L2 80z" fill="#fff" fillOpacity=".6" /><path d="M2 22L66 2v50L2 80zM2 42l64-24M2 60l64-24M18 17v56M34 12v54M50 7v50" stroke="#e0872c" strokeWidth="3" /><path d="M2 22v58M2 22L66 2" stroke="#6b50b0" strokeWidth="3" /><path d="M34 52l38-12 22 8v26L62 92 34 84z" fill="#2878e0" /><path d="M34 52l28 8v32l-28-8z" fill="#f08828" /><path d="M34 52l38-12 22 8-32 12z" fill="#9ac8ff" /><path d="M42 66h16v10H42z" fill="#7a2c08" /></>,
  <><path d="M2 82V34l10-12h38l16 12v48z" fill="#e6e6e6" stroke="#222" strokeWidth="4" /><path d="M12 36v40M34 30v50M46 30v50" stroke="#222" strokeWidth="4" /><path d="M16 44h16v24H16z" fill="#8faacc" stroke="#333" strokeWidth="2" /><path d="M60 92h20l4-18 6-4M60 82h12l4-18h12" stroke="#222" strokeWidth="4" /><At x="62" y="0" s=".85"><path d="M0 10L18 0l14 6v20L14 36 0 28zM0 10l14 7 18-11M14 17v19" fill="#ffc928" stroke="#c02a10" strokeWidth="3" /></At><path d="M56 8Q36 4 38 22h-8l12 10 10-12" fill="#f06018" /></>,
  <><path d="M0 22l20 4v66l-20-4z" fill="#e88a30" /><path d="M24 24l20 4v64l-20-2z" fill="#3ad048" /><path d="M50 24l24 4v64l-24-4z" fill="#4a9ae8" /><path d="M20 26L36 12v66L20 92z" fill="#c06a1c" /><path d="M44 28l16-16v64L44 92z" fill="#1f9a30" /><path d="M74 28L96 8v62L74 92z" fill="#2068c8" /><path d="M0 22L18 8l18 3-16 15zM24 24L42 8l18 3-16 17zM50 24L68 6l28 2-22 20z" fill="#f4f8fc" stroke="#5a6a70" strokeWidth="2" /><path d="M4 42v40M28 44v40M54 44v40" stroke="#ffffffaa" strokeWidth="5" /></>,
  <><circle cx="32" cy="64" r="31" fill="url(#globe)" stroke="#1759ae" strokeWidth="2" /><circle cx="32" cy="46" r="6" fill="#fff" /><path d="M22 56h16v22h6v6H20v-6h7V62h-5z" fill="#fff" /><path d="M30 22q38 2 42 44M30 4q60 2 62 62" stroke="#3468c8" strokeWidth="9" /></>,
  <><path d="M12 2h50l22 22v70H12z" fill="#eef4ff" stroke="#4668b0" strokeWidth="3" /><path d="M62 2v22h22" fill="#fff" stroke="#4668b0" strokeWidth="3" /><circle cx="48" cy="58" r="23" fill="url(#globe)" /><path d="M34 44q14-6 16 4l-8 16-10-6zM56 50q12 0 12 10l-8 14-8-6z" fill="#2f9a40" /></>,
  <Clock x="48" y="48" />,
  <><path d="M4 6h32v88H4z" fill="url(#rainbow)" /><path d="M38 22l12-6 34 70-14 8z" fill="#181818" /><path d="M46 26l26 54" stroke="#ddd" strokeWidth="3" /><path d="M42-2l4 14 12-8-6 14 14 4-14 4 4 12-12-6-6 14-3-15-13 5 7-13-10-6 13-2-4-13 11 7z" fill="#fff" /></>,
  <><path d="M8 14h26v52H8z" fill="#2b8ad8" stroke="#1a5aa0" strokeWidth="3" /><path d="M10 30l22-12M10 44l22-12M10 58l22-12" stroke="#9ad6fa" strokeWidth="4" /><path d="M46 22h44L60 44h30L40 62" stroke="#3c78c8" strokeWidth="5" /><path d="M36 20l10-6 34 58-14 4z" fill="#181818" /><path d="M42 0l4 12 10-6-4 12 12 2-12 6 2 10-11-5-6 10-3-12-10 3 5-11-8-5 11-2-2-11 9 6z" fill="#fff" /><path d="M-10 78q24-8 34 2t30-2 40-4" stroke="#555" strokeWidth="4" /></>,
];
const sideH = ['h-[50px]', 'h-[50px]', 'h-[50px]', 'h-[52px]', 'h-[50px]', 'h-[50px]', 'h-[50px]', 'mt-[5px] h-[62px]', 'h-[62px]', 'h-14 pt-[6px]', 'h-[50px]', 'h-[50px]'];

const ResourceBar = () => (
  <nav className="w-10 shrink-0 bg-[#dcdcdc] border-r border-[#87929a] flex flex-col overflow-hidden">
    <button type="button" aria-label="设置" className="h-[41px] shrink-0 flex justify-center pt-[5px]">
      <Svg className="w-4 h-4" box="0 0 16 16"><circle cx="8" cy="8" r="4.6" stroke="#333" strokeWidth="1.6" /><circle cx="8" cy="8" r="1" fill="#333" /><path d="M8 1v2M8 13v2M1 8h2M13 8h2M3 3l1.5 1.5M11.500 11.500L13 13M3 13l1.500-1.500M11.500 4.500L13 3" stroke="#333" strokeWidth="2" /></Svg>
    </button>
    {side.map((s, i) => (
      <button
        key={i}
        type="button"
        aria-label={`资源 ${i + 1}`}
        className={`${sideH[i]} shrink-0 flex items-center justify-center ${i === 3 ? 'ml-[2px] -mr-px bg-[#f0f0f0] border border-r-0 border-[#87929a]' : 'pl-1'}`}
      >
        <Svg className="w-8 h-8 overflow-visible">{s}</Svg>
      </button>
    ))}
    <div className="flex flex-col items-center">
      <Svg className="w-2 h-[60px]" box="0 0 8 60"><path d="M1 1h6L4-2zM0 3h8v1H0zM1 17h6L4 14z" fill="#a3a3a3" /><path d="M1 28h6L4 31zM0 42h8v1H0zM1 45h6L4 48z" fill="#111" /></Svg>
    </div>
  </nav>
);

/* ---------- operation navigator ---------- */

// one letter per 24px column: v line, t branch, l last branch, r top corner, b toggle, B toggle without a line below, ! status, f folder, o operation, _ blank
const rows = [
  ['', 'NC_PROGRAM'],
  ['rf', '未用项'],
  ['B!f', 'EXAMPLE'],
  ['_b!f', '基本参数比较'],
  ['_vt!o', '封闭的外形', 'purple'],
  ['_vt!o', '封闭的挖槽'],
  ['_vt!o', '开放的'],
  ['_vt!o', '对中延长'],
  ['_vl!o', '附加刀路'],
  ['_b!f', '凸边凹边'],
  ['_vt!o', '相切'],
  ['_vt!o', '对中'],
  ['_vt!o', '边负余量'],
  ['_vl!o', '下刀位'],
  ['_b!f', '不建议的用法'],
  ['_vl!o', '全部粗加工'],
  ['_b!f', '问题'],
  ['_vt!o', '过切', 'purple'],
  ['_vl!o', '解决办法', 'purple'],
  ['_t!o', '零'],
  ['_t!o', '零_COPY'],
];

const dash = { stroke: '#8a8a8a', strokeWidth: 1, strokeDasharray: '1 1', shapeRendering: 'crispEdges' };
const toggle = <><path d="M6.500 8.500h12v12h-12z" fill="#fff" stroke="#c4c4c4" /><path d="M8 14.500h9" stroke="#222" shapeRendering="crispEdges" /></>;
const cells = {
  _: null,
  v: <path d="M12.500 0v28" {...dash} />,
  t: <path d="M12.500 0v28M13 14.500h11" {...dash} />,
  l: <path d="M12.500 0v14M12 14.500h12" {...dash} />,
  r: <path d="M12.500 15v13M12 14.500h12" {...dash} />,
  b: <><path d="M12.500 0v8M12.500 21v7M20 14.500h4" {...dash} />{toggle}</>,
  B: <><path d="M12.500 0v8M20 14.500h4" {...dash} />{toggle}</>,
  '!': (
    <>
      <path d="M12 4.500q4.500 0 3.500 4.500l-2.500 10h-2L8.500 9q-1-4.500 3.500-4.500z" fill="#fdf000" stroke="#b9a400" /><ellipse cx="12" cy="22.500" rx="2.800" ry="2.200" fill="#fdf000" stroke="#b9a400" />
    </>
  ),
  f: (
    <>
      <path d="M2.500 23.500v-16l1.500-2h6l2 3h9.500v15z" fill="#eccf78" stroke="#a58a48" strokeWidth="1.400" /><path d="M4 11h15v10H4z" fill="#fbefbd" />
      <path d="M12 11.500h6.500v4M18.500 15.500H13v5h7" stroke="#fff" strokeWidth="3.500" /><path d="M11.500 11.500h7v4H13v5h7" stroke="#2326e0" strokeWidth="2.200" /><path d="M19.500 16v4" stroke="#2326e0" strokeWidth="1.600" />
    </>
  ),
  o: (
    <>
      <path d="M.5 4.500h4v17h18v4H.5z" fill="#fff" stroke="#8c8c8c" /><path d="M5 5v16h17" stroke="#3a3a3a" strokeWidth="1.500" />
      <path d="M10 2h8v13h-8z" fill="#7c84d4" /><path d="M12 3v12M14 2v13M16 3v12" stroke="#2f38a8" strokeDasharray="1 1" /><path d="M6 10.500h4M18 10.500h5M6 15h4M18 15h5" stroke="#5454ea" strokeWidth="1.400" />
    </>
  ),
};

const TreeRow = ({ cols, label, purple, odd, selected, onSelect }) => (
  <li role="treeitem" aria-selected={selected} onClick={onSelect} className={`h-7 shrink-0 flex border-b border-[#e6e6e6] ${odd ? 'bg-[#fafafa]' : 'bg-white'} ${/^[A-Z_]+$/.test(label) ? 'text-base' : ''}`}>
    {[...cols].map((c, i) => <Svg key={i} className="w-6 h-7" box="0 0 24 28">{cells[c]}</Svg>)}
    <span className={`flex items-center px-[3px] pt-px h-7 whitespace-nowrap ${selected ? 'flex-1 bg-[#3399ff] text-white outline-1 -outline-offset-1 outline-dotted outline-[#c07830]' : purple ? 'text-[#6a1fd0]' : 'text-[#1c1c1c]'}`}>{label}</span>
  </li>
);

const Chev = ({ d }) => <Svg className="w-[10px] h-[10px]" box="0 0 10 10"><path d={d} stroke="#606060" strokeWidth="1.500" /></Svg>;

const Section = ({ title, last }) => (
  <button type="button" className={`${last ? 'h-[25px]' : 'h-7 border-b-2'} shrink-0 w-full flex items-center justify-between pl-[7px] pr-[6px] pt-px border-[#d0d0d0] bg-[#f2f2f2] text-lg leading-none text-[#2e8abd]`}>
    {title}
    <Svg className="w-[15px] h-[12px]" box="0 0 15 12"><path d="M0 0h4l3.500 6L11 0h4L7.500 12z" fill="#2e8abd" /></Svg>
  </button>
);

const Navigator = () => {
  const [selected, setSelected] = useState(12);
  return (
    <aside className="w-[373px] shrink-0 bg-[#f0f0f0] border-r border-[#87929a] pl-[6px] pr-[9px] flex flex-col overflow-hidden text-[15px]">
      <div className="h-[31px] shrink-0 flex items-center justify-between pl-1 pr-[7px] pt-px text-[#1c1c1c]">
        <h2>工序导航器 - 程序顺序</h2>
        <button type="button" aria-label="最大化" className="w-[14px] h-[13px] mt-[2px] border border-t-2 border-[#111]" />
      </div>
      <div className="flex-1 min-h-0 flex flex-col border-2 border-b-0 border-[#dedede]">
        <div className="h-6 shrink-0 flex items-center pl-[5px] pt-px bg-[#eee] border-b border-[#d2d2d2] text-[#1c1c1c]">名称</div>
        <div className="flex-1 min-h-0 flex">
          <ul role="tree" className="flex-1 min-w-0 overflow-hidden flex flex-col bg-white">
            {rows.map(([cols, label, color], i) => (
              <TreeRow key={i} cols={cols} label={label} purple={color === 'purple'} odd={i % 2 === 1} selected={selected === i} onSelect={() => setSelected(i)} />
            ))}
          </ul>
          <div className="w-[21px] shrink-0 flex flex-col border border-[#b8b8b8] bg-white">
            <button type="button" aria-label="向上" className="h-5 shrink-0 flex items-center justify-center"><Chev d="M1 7l4-4 4 4" /></button>
            <div className="grow-[475] basis-0 bg-[#dcdcdc] border-y border-[#a0a0a0] flex items-center justify-center">
              <Svg className="w-[9px] h-[10px]" box="0 0 9 10"><path d="M0 1h9M0 5h9M0 9h9" stroke="#555" strokeWidth="1.500" /></Svg>
            </div>
            <div className="grow-[71] basis-0" />
            <button type="button" aria-label="向下" className="h-5 shrink-0 flex items-center justify-center border-t border-[#b8b8b8]"><Chev d="M1 3l4 4 4-4" /></button>
          </div>
        </div>
        <div className="h-[21px] shrink-0 mr-[21px] flex border border-[#b8b8b8] bg-white">
          <button type="button" aria-label="向左" className="w-5 flex items-center justify-center"><Chev d="M7 1L3 5l4 4" /></button>
          <div className="w-[89px] bg-[#dcdcdc] border-x border-[#a0a0a0] flex items-center justify-center">
            <Svg className="w-[10px] h-[9px]" box="0 0 10 9"><path d="M1 0v9M5 0v9M9 0v9" stroke="#555" strokeWidth="1.500" /></Svg>
          </div>
          <button type="button" aria-label="向右" className="w-5 ml-auto flex items-center justify-center border-l border-[#b8b8b8]"><Chev d="M3 1l4 4-4 4" /></button>
        </div>
      </div>
      <div className="h-[6px] shrink-0 bg-[#dcdcdc] border-y border-[#bdbdbd]" />
      <Section title="相依性" />
      <Section title="细节" last />
    </aside>
  );
};

/* ---------- graphics window ---------- */

const Part = () => (
  <svg viewBox="0 0 990 840" className="absolute left-[297px] top-[213px] w-[330px] h-[280px]" fill="none" strokeLinejoin="round">
    <path d="M46 242L92 257 270 732 248 783z" fill="#735800" />
    <path d="M268 732L943 570 938 592 920 623 248 783z" fill="#3d2e02" />
    <path d="M48 240L360 170 376 144 452 127 462 105 520 92 528 107 645 80 650 68 738 48 798 207 797 218 865 402 882 400 943 570 268 732 92 257 73 290 62 284z" fill="#fff92c" />
    <g stroke="#c08c0c" strokeWidth="5">
      <path d="M46 242L248 783 920 623 943 570 882 400 702 440Q656 444 636 398L574 262 520 92 462 105Q456 122 458 142 448 168 420 172L370 188 96 254 270 732 943 570M270 732L248 783M48 240L360 170 376 144 452 127 462 105M370 188Q376 176 372 152M360 170v18M528 107L645 80M865 402L797 218M62 284L73 290 92 257" />
      <path d="M650 68L738 48 798 207 710 226zM645 80L704 234 797 214M738 48L742 60" />
      <path d="M452 436L625 398M394 312L575 272M575 272L625 398M588 272L640 400" />
      <path d="M540 520L656 490 684 568 556 602Q534 590 526 560 522 530 540 520zM526 552l-3-22M656 490l10 36" />
    </g>
    <path d="M196 330Q240 300 330 282 380 284 402 318L440 420 450 470 436 484 438 456 400 336Q380 304 344 300L300 306Q240 318 192 346z" fill="#493802" />
    <path d="M310 306l12-18-4 2h40l22 16-40-4zM224 320l10-18 76-14-12 20z" fill="#6d5602" />
    <path d="M188 350Q178 378 194 420L224 480Q250 524 302 522L404 500Q440 486 450 466L448 434 402 318Q384 284 342 284L240 304Q190 320 188 350zM188 350Q210 332 250 322L330 302Q374 300 392 326L436 430Q440 460 436 488M222 328l12-24M308 308l12-22" stroke="#c08c0c" strokeWidth="5" />
    <path d="M400 308L568 272M710 238l84-18M556 604l126-32" stroke="#453502" strokeWidth="6" />
    <path d="M378 152v26M462 116q2 24-4 40" stroke="#7a5c06" strokeWidth="5" />
    <path d="M528 556q4 30 24 44" stroke="#5c4702" strokeWidth="8" />
    <g stroke="#d99a10" strokeWidth="4"><circle cx="585" cy="266" r="11" /><circle cx="612" cy="342" r="11" /><circle cx="524" cy="368" r="18" /><path d="M516 404l24 12M414 348l16 26" /></g>
    <path d="M538 566L668 528" stroke="#0b0ba8" strokeWidth="4" />
    <path d="M352 366L650 294 672 356 376 430zM398 389L626 334" stroke="#14f4f4" strokeWidth="7" />
    <path d="M512 374L430 148" stroke="#2f9e33" strokeWidth="5" /><path d="M408 98l30 52-24 10z" fill="#2d9d49" stroke="#1c6e30" strokeWidth="2" />
    <path d="M512 374L562 262" stroke="#0a1f9c" strokeWidth="5" /><path d="M572 240l2 38-22-8z" fill="#0a1f9c" stroke="#06125e" strokeWidth="3" /><path d="M518 324l12-10 8 4-6 16-12 4z" fill="#0a2af0" />
    <path d="M512 374L746 320" stroke="#c8502a" strokeWidth="5" /><path d="M800 306l-62 4 4 18z" fill="#e02c2c" stroke="#a01c1c" strokeWidth="2" />
    <g fontFamily="Liberation Sans, sans-serif" fontSize="39">
      <text x="420" y="91" fill="#3f9a55">YM</text><text x="516" y="234" fill="#3048d8">ZM</text><text x="748" y="290" fill="#c83a3a">XM</text>
    </g>
  </svg>
);

const Triad = () => (
  <svg viewBox="0 0 300 240" className="absolute left-[27px] bottom-8 w-[100px] h-[80px]" fill="none">
    <path d="M92 82L154 68 178 130 162 160 98 176 74 112z" fill="#dcdadf" stroke="#a88ab0" strokeWidth="4" />
    <path d="M92 82l24 56 62-8M116 138l-18 38M74 112l66-14 14-30M140 98l22 62" stroke="#a88ab0" strokeWidth="3" />
    <path d="M96 178L68 100" stroke="#2f9a3a" strokeWidth="7" /><path d="M58 70l20 32-18 6z" fill="#1f9030" />
    <path d="M96 178L188 158" stroke="#d84040" strokeWidth="6" /><path d="M210 152l-30-4 4 17z" fill="#e02424" />
    <path d="M98 176L116 140" stroke="#0a28a8" strokeWidth="9" /><path d="M124 124l0 32-20-12z" fill="#0a28a8" />
    <circle cx="97" cy="178" r="12" fill="#d4d4d4" stroke="#9b9b9b" strokeWidth="3" />
    <g fontFamily="Liberation Sans, sans-serif" fontSize="36"><text x="40" y="70" fill="#3d9a48">Y</text><text x="114" y="134" fill="#2c4cf0">Z</text><text x="213" y="161" fill="#e23030">X</text></g>
  </svg>
);

const Watermark = () => (
  <div className="absolute right-2 bottom-2 flex items-center gap-[10px] text-[#7accf0]">
    <svg viewBox="30 30 250 284" className="w-[83px] h-[94px]" fill="none">
      <path d="M154 32L276 102V242L154 312 32 242V102z" fill="#7accf2" />
      <path d="M154 32L196 56Q222 96 218 134L154 96 90 134Q84 170 88 208 78 246 92 280L32 242V102z" fill="#74a3da" />
      <path d="M78 80Q150 72 218 132M196 58Q228 96 220 146M276 150Q276 200 220 222M218 132Q262 134 276 152M90 208Q136 264 220 268M88 206Q80 250 92 280M34 192Q44 150 88 134" stroke="#e9f6fd" strokeWidth="4" />
      <path d="M154 96L221 134V208L154 232 87 206V134z" fill="#fff" />
      <path d="M154 108L208 140 154 172 102 140z" fill="#74a3da" /><path d="M102 144L152 174V234L102 204z" fill="#74a3da" /><path d="M208 144L157 174V234L208 204z" fill="#7accf2" />
    </svg>
    <div className="flex flex-col">
      <div className="text-[46px] leading-[48px] font-bold">3D世界网</div>
      <div className="text-xl leading-4 font-['DejaVu_Sans']">WWW.3DSJW.COM</div>
    </div>
  </div>
);

export default function App() {
  const [query, setQuery] = useState('查找命令');

  return (
    <div className="h-screen flex flex-col overflow-hidden bg-[#f5f5f5] text-[#111] font-['Open_Sans','Noto_Sans_CJK_SC',sans-serif]">
      <Defs />
      <header className="h-[30px] shrink-0 flex items-center pl-1">
        <span className="w-[42px] text-[25px] leading-[30px] font-bold text-[#8b9fae] font-['Liberation_Sans']">NX</span>
        <h1 className="border-l border-[#dedede] h-6 pl-1 flex items-center text-base whitespace-pre">NX 10 - 加工 - [1平面铣.prt （修改的 ）]</h1>
      </header>

      <nav className="h-[31px] shrink-0 flex items-center bg-[#c8d8d7] text-sm">
        <MenuGrip />
        <Svg className="w-5 h-5 mr-[6px]"><Tool x="8" y="2" s="1.2" /><Hatch x="44" y="22" /><Spark x="22" y="82" s=".5" /></Svg>
        <div className="flex gap-[15px] pb-px text-[#1c1c1c]">
          {menus.map(([name, key, wide]) => (
            <button key={name} type="button" className={wide ? 'ml-[6px]' : ''}>{name}{key && <>(<u className="underline-offset-2">{key}</u>)</>}</button>
          ))}
        </div>
      </nav>

      <div className="h-[42px] shrink-0 flex gap-px overflow-hidden">
        <Group>
          <button type="button" className="flex items-center h-full pl-[3px] gap-1 text-sm shrink-0"><Svg>{icons.globe}</Svg>启动</button>
          <Items list={['v', 'newFile', 'open', 'save', '|', 'cut', 'copy', 'paste', 'del', '|', 'undo', 'v', '|', 'open', 'v', '|']} />
          <div className="relative ml-1 w-[157px] shrink-0">
            <input aria-label="查找命令" value={query} onChange={e => setQuery(e.target.value)} className="w-full h-6 bg-white border border-[#a9a9a9] pl-px pr-6 text-sm leading-none outline-none" />
            <Svg className="w-4 h-4 absolute right-1 top-1 pointer-events-none" box="0 0 16 16"><circle cx="10" cy="5.500" r="4.500" stroke="#333" strokeWidth="1.200" /><circle cx="10" cy="5.500" r="2" stroke="#555" /><path d="M7 9l-5 5M6 8l-4.500 4.500 1.500 2" stroke="#333" strokeWidth="1.200" /></Svg>
          </div>
          <div className="pl-1 pr-[2px] h-full"><Caret low /></div>
        </Group>
        <Group><Items list={['fit', 'v', 'bracket', 'v', 'sphere', 'v', 'shade', 'v', '|', 'plane', 'plane2', 'm']} /></Group>
        <Group><Items list={['palette', '|', 'play', 'v', '|', 'dist', 'v', 'ruler', 'm']} /></Group>
      </div>

      <div className="h-[42px] shrink-0 flex gap-px pl-[15px] overflow-hidden">
        {row2.map((list, i) => <Group key={i}><Items list={list} /></Group>)}
      </div>

      <div className="h-[42px] shrink-0 flex items-center pl-[5px] border-b border-[#87929a]">
        <Combo label="选择过滤器" value="没有选择过滤器" className="w-[167px] mr-[7px]" />
        <Combo label="选择范围" value="整个装配" className="w-[176px] mr-[3px]" />
        <Items list={['link', '|']} />
        <div className="flex ml-[2px]"><IconBtn name="filterReset" narrow /><IconBtn name="filterSel" narrow /></div>
        <Caret />
        <div className="flex mx-[3px]"><IconBtn name="rotateSel" narrow /><IconBtn name="findTree" narrow /></div>
        <Items list={['|', 'rectSel', 'v', '|', 'face', 'cube']} />
      </div>

      <div className="flex-1 min-h-0 flex">
        <ResourceBar />
        <Navigator />
        <main className="relative flex-1 min-w-0 bg-white overflow-hidden">
          <Part />
          <Triad />
          <Watermark />
        </main>
      </div>
    </div>
  );
}
